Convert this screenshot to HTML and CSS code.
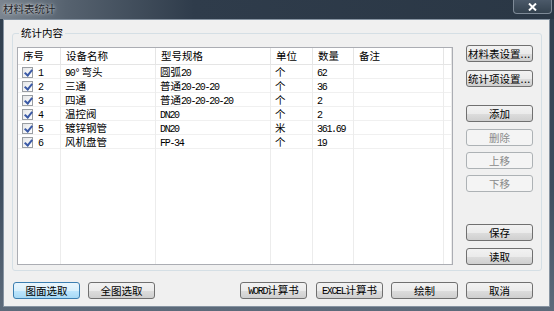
FILE: index.html
```html
<!DOCTYPE html>
<html lang="zh-CN">
<head>
    <meta charset="UTF-8">
    <title>材料表统计</title>
    <link rel="stylesheet" href="styles.css">
</head>
<body>
    <div class="window">
        <!-- Title bar -->
        <div class="titlebar">
            <span class="title">材料表统计</span>
            <span class="close">
                <svg width="9" height="8" viewBox="0 0 9 8"><path d="M1 0.5 L8 7.5 M8 0.5 L1 7.5" stroke="#fff" stroke-width="2"/></svg>
            </span>
        </div>

        <div class="client">
            <!-- Group box -->
            <div class="group">
                <span class="group-label">统计内容</span>

                <div class="list">
                    <div class="row head">
                        <div class="cell">序号</div>
                        <div class="cell">设备名称</div>
                        <div class="cell">型号规格</div>
                        <div class="cell">单位</div>
                        <div class="cell">数量</div>
                        <div class="cell">备注</div>
                        <div class="cell"></div>
                    </div>
                    <div class="row">
                        <div class="cell"><span class="check"></span><span class="en">1</span></div>
                        <div class="cell"><span class="en">90°</span> 弯头</div>
                        <div class="cell">圆弧<span class="en">20</span></div>
                        <div class="cell">个</div>
                        <div class="cell"><span class="en">62</span></div>
                        <div class="cell"></div>
                        <div class="cell"></div>
                    </div>
                    <div class="row">
                        <div class="cell"><span class="check"></span><span class="en">2</span></div>
                        <div class="cell">三通</div>
                        <div class="cell">普通<span class="en">20-20-20</span></div>
                        <div class="cell">个</div>
                        <div class="cell"><span class="en">36</span></div>
                        <div class="cell"></div>
                        <div class="cell"></div>
                    </div>
                    <div class="row">
                        <div class="cell"><span class="check"></span><span class="en">3</span></div>
                        <div class="cell">四通</div>
                        <div class="cell">普通<span class="en">20-20-20-20</span></div>
                        <div class="cell">个</div>
                        <div class="cell"><span class="en">2</span></div>
                        <div class="cell"></div>
                        <div class="cell"></div>
                    </div>
                    <div class="row">
                        <div class="cell"><span class="check"></span><span class="en">4</span></div>
                        <div class="cell">温控阀</div>
                        <div class="cell"><span class="en">DN20</span></div>
                        <div class="cell">个</div>
                        <div class="cell"><span class="en">2</span></div>
                        <div class="cell"></div>
                        <div class="cell"></div>
                    </div>
                    <div class="row">
                        <div class="cell"><span class="check"></span><span class="en">5</span></div>
                        <div class="cell">镀锌钢管</div>
                        <div class="cell"><span class="en">DN20</span></div>
                        <div class="cell">米</div>
                        <div class="cell"><span class="en">361.69</span></div>
                        <div class="cell"></div>
                        <div class="cell"></div>
                    </div>
                    <div class="row">
                        <div class="cell"><span class="check"></span><span class="en">6</span></div>
                        <div class="cell">风机盘管</div>
                        <div class="cell"><span class="en">FP-34</span></div>
                        <div class="cell">个</div>
                        <div class="cell"><span class="en">19</span></div>
                        <div class="cell"></div>
                        <div class="cell"></div>
                    </div>
                    <div class="row filler">
                        <div class="cell"></div>
                        <div class="cell"></div>
                        <div class="cell"></div>
                        <div class="cell"></div>
                        <div class="cell"></div>
                        <div class="cell"></div>
                        <div class="cell"></div>
                    </div>
                </div>

                <!-- Side buttons -->
                <div class="side">
                    <button class="btn btn-left">材料表设置<span class="dots">...</span></button>
                    <button class="btn btn-left gap-8">统计项设置<span class="dots">...</span></button>
                    <button class="btn gap-18">添加</button>
                    <button class="btn gap-7" disabled>删除</button>
                    <button class="btn gap-6" disabled>上移</button>
                    <button class="btn gap-6" disabled>下移</button>
                    <button class="btn push">保存</button>
                    <button class="btn gap-7">读取</button>
                </div>
            </div>

            <!-- Bottom buttons -->
            <div class="bottom">
                <button class="btn default">图面选取</button>
                <button class="btn">全图选取</button>
                <span class="spacer"></span>
                <button class="btn"><span class="en">WORD</span>计算书</button>
                <button class="btn"><span class="en">EXCEL</span>计算书</button>
                <button class="btn">绘制</button>
                <button class="btn">取消</button>
            </div>
        </div>
    </div>
</body>
</html>
```
FILE: styles.css
```css
/* ===== BASE ===== */
* {
    margin: 0;
    padding: 0;
    box-sizing: border-box;
}

body {
    background: #2b3846;
    font-family: "Noto Sans CJK SC", "Liberation Sans", sans-serif;
    font-size: 10.5px;
    color: #000;
}

/* ===== WINDOW FRAME ===== */
.window {
    width: 554px;
    height: 311px;
    display: flex;
    flex-direction: column;
    background: linear-gradient(180deg, #2f3d4c 0%, #3e4d5e 60%, #5d6b7b 100%);
}

.titlebar {
    height: 19px;
    display: flex;
    align-items: flex-start;
    justify-content: space-between;
    background: linear-gradient(90deg, #7b8590 0%, #56626f 12%, #2f3c4b 35%, #2a3745 100%);
}

.title {
    padding: 2px 0 0 3px;
    font-size: 10.5px;
    line-height: 13px;
    color: #1e2328;
    text-shadow: 0 0 4px rgba(255, 255, 255, 0.7), 0 0 2px rgba(255, 255, 255, 0.5);
}

.close {
    width: 39px;
    height: 14px;
    margin-right: 2px;
    display: flex;
    align-items: center;
    justify-content: center;
    background: linear-gradient(180deg, #4b5969 0%, #34424f 100%);
    border: 1px solid #7e8a97;
    border-top: none;
    border-radius: 0 0 4px 4px;
}

.client {
    flex: 1;
    margin: 0 4px 4px 3px;
    background: #f0f0f0;
    border: 1px solid #8794a2;
    display: flex;
    flex-direction: column;
}

/* ===== GROUP BOX ===== */
.group {
    position: relative;
    height: 238px;
    margin: 13px 7px 0 8px;
    padding: 11px 8px 5px 4px;
    border: 1px solid #d5dfe5;
    border-radius: 3px;
    display: flex;
}

.group-label {
    position: absolute;
    top: -8px;
    left: 6px;
    padding: 0 2px;
    background: #f0f0f0;
    line-height: 14px;
}

/* ===== LIST VIEW ===== */
.list {
    width: 436px;
    margin-top: 2px;
    background: #fff;
    border: 1px solid #abadb3;
    display: flex;
    flex-direction: column;
}

.row {
    display: grid;
    grid-template-columns: 43px 95px 115px 42px 41px 90px 1fr;
    height: 14px;
    border-bottom: 1px solid #f0f0f0;
}

.row.head {
    height: 17px;
    border-bottom: 1px solid #e5e5e5;
}

.row.filler {
    flex: 1;
    border-bottom: none;
}

.cell {
    padding-left: 4px;
    line-height: 13px;
    white-space: nowrap;
    border-right: 1px solid #ececec;
}

.head .cell {
    padding-left: 5px;
    line-height: 16px;
    border-right: 1px solid #e5e5e5;
}

.en {
    font-family: "Liberation Mono", monospace;
    font-size: 10px;
    letter-spacing: -1.3px;
}

.check {
    display: inline-block;
    vertical-align: -2px;
    width: 11px;
    height: 11px;
    margin-right: 5px;
    border: 1px solid #9a9ea3;
    background: linear-gradient(135deg, #e4e6e8, #ffffff);
    position: relative;
}

.check::after {
    content: "";
    position: absolute;
    left: 3px;
    top: 0;
    width: 3px;
    height: 6px;
    border: solid #3b5aa6;
    border-width: 0 2px 2px 0;
    transform: rotate(40deg);
}

/* ===== BUTTONS ===== */
.btn {
    width: 67px;
    height: 17px;
    padding: 0;
    font-family: "Noto Sans CJK SC", "Liberation Sans", sans-serif;
    font-size: 10.5px;
    line-height: 14px;
    color: #000;
    white-space: nowrap;
    border: 1px solid #707070;
    border-radius: 3px;
    background: linear-gradient(180deg, #f2f2f2 0%, #ebebeb 50%, #dddddd 51%, #cfcfcf 100%);
}

.btn:disabled {
    color: #8a8a8a;
    border-color: #adb2b5;
    background: #f4f4f4;
}

.btn.default {
    border-color: #3c7fb1;
    background: linear-gradient(180deg, #eaf6fd 0%, #d9f0fc 50%, #bee6fd 51%, #a7d9f5 100%);
}

.btn-left {
    text-align: left;
    padding-left: 1px;
}

.dots {
    letter-spacing: 0.5px;
}

.side {
    width: 67px;
    margin-left: 13px;
    display: flex;
    flex-direction: column;
}

.gap-6 { margin-top: 6px; }
.gap-7 { margin-top: 7px; }
.gap-8 { margin-top: 8px; }
.gap-18 { margin-top: 18px; }
.push { margin-top: auto; }

/* ===== BOTTOM ROW ===== */
.bottom {
    display: flex;
    gap: 8px;
    margin: 11px 0 0 9px;
    padding-right: 16px;
}

.bottom .spacer {
    flex: 1;
}

.bottom .btn:nth-child(5) {
    margin-left: 1px;
}
```
